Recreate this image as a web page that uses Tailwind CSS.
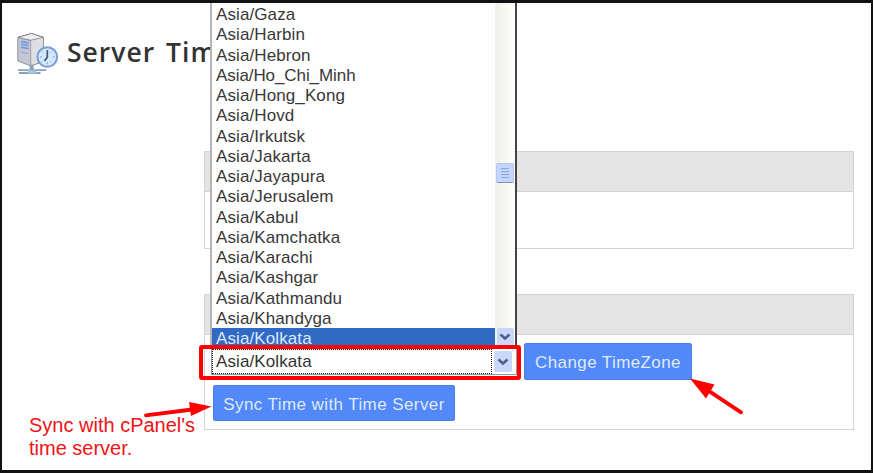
<!DOCTYPE html>
<html lang="en">
<head>
<meta charset="utf-8">
<title>Server Time</title>
<script src="https://cdn.jsdelivr.net/npm/@tailwindcss/browser@4"></script>
</head>
<body class="font-['Liberation_Sans',sans-serif]">
<main class="relative h-[473px] w-[873px] overflow-hidden border-t-[3px] border-r-2 border-b-[3px] border-l-2 border-[#111] bg-[#fefefe]">
  <header class="flex h-[148px] items-start pl-[15px] pt-[29px]">
    <svg class="h-[44px] w-[43px] shrink-0" viewBox="0 0 44 44">
      <path d="M1 5 15 1 27 5v25l-13 4L1 29z" fill="#d3d3d8" stroke="#85858c"/>
      <path d="M1 5 14 8v26L1 29z" fill="#c5c8d4" stroke="#91939d" stroke-width=".7"/>
      <path d="M1 5 15 1l12 4-13 3z" fill="#efeff1" stroke="#77777e" stroke-width=".8"/>
      <path d="M15 8.500 26.500 5.500v24L15 33z" fill="#dfdfe3"/>
      <path d="m4 9 8 1.500M4 12l8 1.500M4 15l8 1.500" stroke="#6e9ce0" stroke-width="1.800"/>
      <path d="m4 20 7 1.500" stroke="#8e9cb9"/>
      <path d="M15 33v6" stroke="#8aa0b4" stroke-width="4"/>
      <path d="M1 38.500h29M2 41.500h22" stroke="#86a2ba" stroke-width="2"/>
      <path d="M11 38.500h9v3.500h-9z" fill="#a9c4d8"/>
      <circle cx="31" cy="25" r="10" fill="#d4eafc" stroke="#7c9fd3" stroke-width="2"/>
      <path d="M31 18v7.500l-3 3.500" fill="none" stroke="#465a86" stroke-width="1.800"/>
      <path d="M23.500 25h2m11 0h2m-7.500 5.500v2m-5-13 1 1m9-1-1 1m-9 9-1 1m9-1 1 1" stroke="#7599cc"/>
    </svg>
    <h1 class="ml-[7px] mt-[2px] w-[143px] overflow-hidden whitespace-nowrap font-['Open_Sans',sans-serif] text-[26.5px] leading-[36px] font-semibold tracking-[1px] [word-spacing:3px] text-[#333]">Server Tim</h1>
  </header>

  <section class="ml-[202px] h-[98px] w-[650px] border border-[#d4d4d4]">
    <div class="h-[40px] border-b border-[#d4d4d4] bg-[#e4e4e4]"></div>
  </section>
  <section class="ml-[202px] mt-[45px] h-[136px] w-[650px] border border-[#d4d4d4]">
    <div class="h-[40px] border-b border-[#d4d4d4] bg-[#e4e4e4]"></div>
    <div class="flex h-[43px] items-start pl-[6px] pt-[10px]">
      <div class="mt-[3px] flex h-[27px] w-[306px] items-center border border-[#8e9baa] bg-white">
        <div class="flex h-[25px] flex-1 items-center border border-dotted border-[#222] pl-[3px] text-[17px] leading-none tracking-[0.1px] text-[#333]">Asia/Kolkata</div>
        <div class="mr-[4px] ml-[2px] flex h-[21px] w-[18px] items-center justify-center rounded-xs bg-[#c8d7fa]">
          <svg class="h-[8px] w-[12px]" viewBox="0 0 12 8"><path d="m1.500 1.500 4.500 4 4.500-4" fill="none" stroke="#4d6185" stroke-width="2.600"/></svg>
        </div>
      </div>
      <button class="-mt-[2px] ml-[7px] h-[37px] w-[168px] shrink-0 whitespace-nowrap rounded-xs border border-[#4a7fe6] bg-[#5388f8] pt-[2px] text-[17px] leading-none tracking-[0.4px] text-[#deebff]">Change TimeZone</button>
    </div>
    <button class="ml-[8px] mt-[7px] block h-[36px] w-[242px] whitespace-nowrap rounded-xs border border-[#4a7fe6] bg-[#5388f8] pt-[2px] text-[17px] leading-none tracking-[0.42px] text-[#deebff]">Sync Time with Time Server</button>
  </section>

  <!-- Open time zone list -->
  <div class="absolute top-0 left-[208px] flex h-[343px] w-[307px] border-r-2 border-l-2 border-l-[#b5b5b5] border-r-[#444] bg-[#fefefe]">
    <ul class="flex-1 text-[17px] tracking-[0.1px] text-[#383838] [&>li]:h-[20.25px] [&>li]:whitespace-nowrap [&>li]:pl-[4px] [&>li]:leading-[23px]">
      <li>Asia/Gaza</li>
      <li>Asia/Harbin</li>
      <li>Asia/Hebron</li>
      <li class="tracking-[-0.08px]">Asia/Ho_Chi_Minh</li>
      <li>Asia/Hong_Kong</li>
      <li>Asia/Hovd</li>
      <li>Asia/Irkutsk</li>
      <li>Asia/Jakarta</li>
      <li>Asia/Jayapura</li>
      <li>Asia/Jerusalem</li>
      <li>Asia/Kabul</li>
      <li>Asia/Kamchatka</li>
      <li>Asia/Karachi</li>
      <li>Asia/Kashgar</li>
      <li>Asia/Kathmandu</li>
      <li>Asia/Khandyga</li>
      <li class="bg-[linear-gradient(#fefefe_1px,#316ac5_1px)] text-[#dbe8ff]">Asia/Kolkata</li>
    </ul>
    <div class="flex w-[20px] flex-col items-center bg-linear-to-r from-[#f0f0e9] to-[#fefefb]">
      <div class="mt-[160px] flex h-[20px] w-[18px] flex-col items-center justify-center gap-[2px] rounded-xs border border-[#b4c8f3] border-b-[#8196bd] bg-[#c5d5fc]">
        <span class="h-px w-[8px] bg-[#88a7e8]"></span>
        <span class="h-px w-[8px] bg-[#88a7e8]"></span>
        <span class="h-px w-[8px] bg-[#88a7e8]"></span>
        <span class="h-px w-[8px] bg-[#88a7e8]"></span>
      </div>
      <div class="mt-auto flex h-[18px] w-[17px] items-center justify-center rounded-xs bg-[#c8d7fa]">
        <svg class="h-[8px] w-[12px]" viewBox="0 0 12 8"><path d="m1.500 1.500 4.500 4 4.500-4" fill="none" stroke="#4d6185" stroke-width="2.500"/></svg>
      </div>
    </div>
  </div>

  <!-- Annotations -->
  <div class="absolute top-[342px] left-[197px] h-[35px] w-[322px] rounded-[3px] border-4 border-[#f00]"></div>
  <p class="absolute top-[411px] left-[27px] whitespace-nowrap text-[20px] leading-[23px] text-[#f01318]">Sync with cPanel's<br>time server.</p>
  <svg class="absolute -top-[3px] -left-[2px] h-[473px] w-[873px]" viewBox="0 0 873 473" fill="#f00" stroke="#f00">
    <path d="M146 415.300 192 409.500M741 412.300l-30-20" stroke-width="3.800" stroke-linecap="round"/>
    <path d="m211.500 406.500-22.500-4.500 2 14zM690 378.500l24.500 6-8.500 14z" stroke="none"/>
  </svg>
</main>
</body>
</html>
